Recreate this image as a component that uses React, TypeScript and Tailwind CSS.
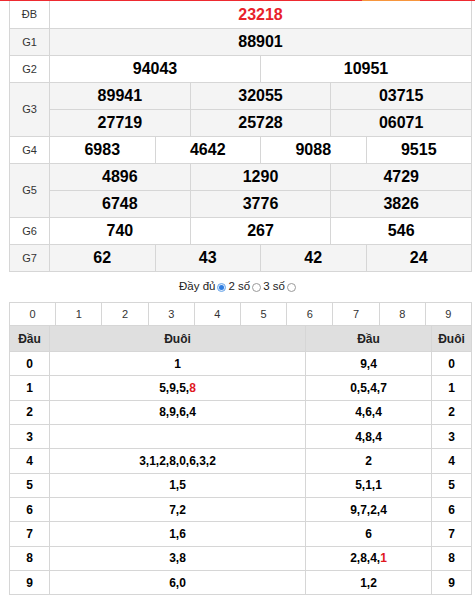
import React from "react";

const B = "border-[#d6d6d6]";

type Row = { label: string; rows: string[][]; gray: boolean; red?: boolean; first?: boolean };

const prizes: Row[] = [
  { label: "ĐB", rows: [["23218"]], gray: false, red: true, first: true },
  { label: "G1", rows: [["88901"]], gray: true },
  { label: "G2", rows: [["94043", "10951"]], gray: false },
  { label: "G3", rows: [["89941", "32055", "03715"], ["27719", "25728", "06071"]], gray: true },
  { label: "G4", rows: [["6983", "4642", "9088", "9515"]], gray: false },
  { label: "G5", rows: [["4896", "1290", "4729"], ["6748", "3776", "3826"]], gray: true },
  { label: "G6", rows: [["740", "267", "546"]], gray: false },
  { label: "G7", rows: [["62", "43", "42", "24"]], gray: true },
];

type Part = { t: string; red?: boolean };
const loto: { d: string; tail: Part[]; head: Part[] }[] = [
  { d: "0", tail: [{ t: "1" }], head: [{ t: "9,4" }] },
  { d: "1", tail: [{ t: "5,9,5," }, { t: "8", red: true }], head: [{ t: "0,5,4,7" }] },
  { d: "2", tail: [{ t: "8,9,6,4" }], head: [{ t: "4,6,4" }] },
  { d: "3", tail: [], head: [{ t: "4,8,4" }] },
  { d: "4", tail: [{ t: "3,1,2,8,0,6,3,2" }], head: [{ t: "2" }] },
  { d: "5", tail: [{ t: "1,5" }], head: [{ t: "5,1,1" }] },
  { d: "6", tail: [{ t: "7,2" }], head: [{ t: "9,7,2,4" }] },
  { d: "7", tail: [{ t: "1,6" }], head: [{ t: "6" }] },
  { d: "8", tail: [{ t: "3,8" }], head: [{ t: "2,8,4," }, { t: "1", red: true }] },
  { d: "9", tail: [{ t: "6,0" }], head: [{ t: "1,2" }] },
];

function Parts({ parts }: { parts: Part[] }) {
  return (
    <>
      {parts.map((p, i) => (
        <span key={i} className={p.red ? "text-[#e0181e]" : ""}>
          {p.t}
        </span>
      ))}
    </>
  );
}

function Radio({ checked }: { checked?: boolean }) {
  if (checked) {
    return (
      <span className="mx-[2px] inline-flex h-[9px] w-[9px] items-center justify-center rounded-full border border-[#6fa8e8] bg-[#dbe9fb]">
        <span className="h-[5px] w-[5px] rounded-full bg-[#2f7de1]" />
      </span>
    );
  }
  return <span className="mx-[2px] inline-block h-[9px] w-[9px] rounded-full border border-[#9a9a9a] bg-white" />;
}

export default function App() {
  return (
    <div
      className="min-h-[596px] w-[475px] bg-white text-black"
      style={{ fontFamily: '"Liberation Sans", Arial, sans-serif' }}
    >
      <div className="flex h-px">
        <div className="w-[362px] bg-[#ee2a30]" />
        <div className="w-[58px] bg-[#f7963d]" />
        <div className="flex-1 bg-[#ee2a30]" />
      </div>

      <div className={`ml-[9px] w-[463px] border-l ${B}`}>
        {prizes.map((p) => (
          <div key={p.label} className={`flex ${p.gray ? "bg-[#f4f4f4]" : "bg-white"}`}>
            <div
              className={`flex w-[40px] shrink-0 items-center justify-center border-b border-r ${B} text-[11px] text-[#333]`}
            >
              {p.label}
            </div>
            <div className="flex flex-1 flex-col">
              {p.rows.map((r, ri) => (
                <div key={ri} className={`flex ${p.first ? "h-[28px]" : "h-[27px]"} border-b ${B}`}>
                  {r.map((n, ni) => (
                    <div
                      key={ni}
                      className={`flex flex-1 items-center justify-center border-r ${B} text-[16px] font-bold ${
                        p.red ? "text-[#e8222a]" : "text-black"
                      }`}
                    >
                      {n}
                    </div>
                  ))}
                </div>
              ))}
            </div>
          </div>
        ))}
      </div>

      <div className="flex h-[30px] items-center justify-center pl-[2px] text-[11.5px] text-[#222]">
        <span>Đầy đủ</span>
        <Radio checked />
        <span>2 số</span>
        <Radio />
        <span>3 số</span>
        <Radio />
      </div>

      <div className={`ml-[9px] w-[463px] border-l border-t ${B}`}>
        <div className={`flex h-[23px]`}>
          {["0", "1", "2", "3", "4", "5", "6", "7", "8", "9"].map((d) => (
            <div
              key={d}
              className={`flex flex-1 items-center justify-center border-b border-r ${B} text-[11px] text-[#333]`}
            >
              {d}
            </div>
          ))}
        </div>
        <div className="flex h-[26px] bg-[#dfdfdf] text-[12px] font-bold text-[#222]">
          <div className={`flex w-[40px] items-center justify-center border-b border-r ${B}`}>Đầu</div>
          <div className={`flex w-[256px] items-center justify-center border-b border-r ${B}`}>Đuôi</div>
          <div className={`flex w-[126px] items-center justify-center border-b border-r ${B}`}>Đầu</div>
          <div className={`flex w-[40px] items-center justify-center border-b border-r ${B}`}>Đuôi</div>
        </div>
        {loto.map((r) => (
          <div key={r.d} className="flex h-[24.33px] text-[12px] font-bold text-black">
            <div className={`flex w-[40px] items-center justify-center border-b border-r ${B}`}>{r.d}</div>
            <div className={`flex w-[256px] items-center justify-center border-b border-r ${B}`}>
              <Parts parts={r.tail} />
            </div>
            <div className={`flex w-[126px] items-center justify-center border-b border-r ${B}`}>
              <Parts parts={r.head} />
            </div>
            <div className={`flex w-[40px] items-center justify-center border-b border-r ${B}`}>{r.d}</div>
          </div>
        ))}
      </div>
    </div>
  );
}
